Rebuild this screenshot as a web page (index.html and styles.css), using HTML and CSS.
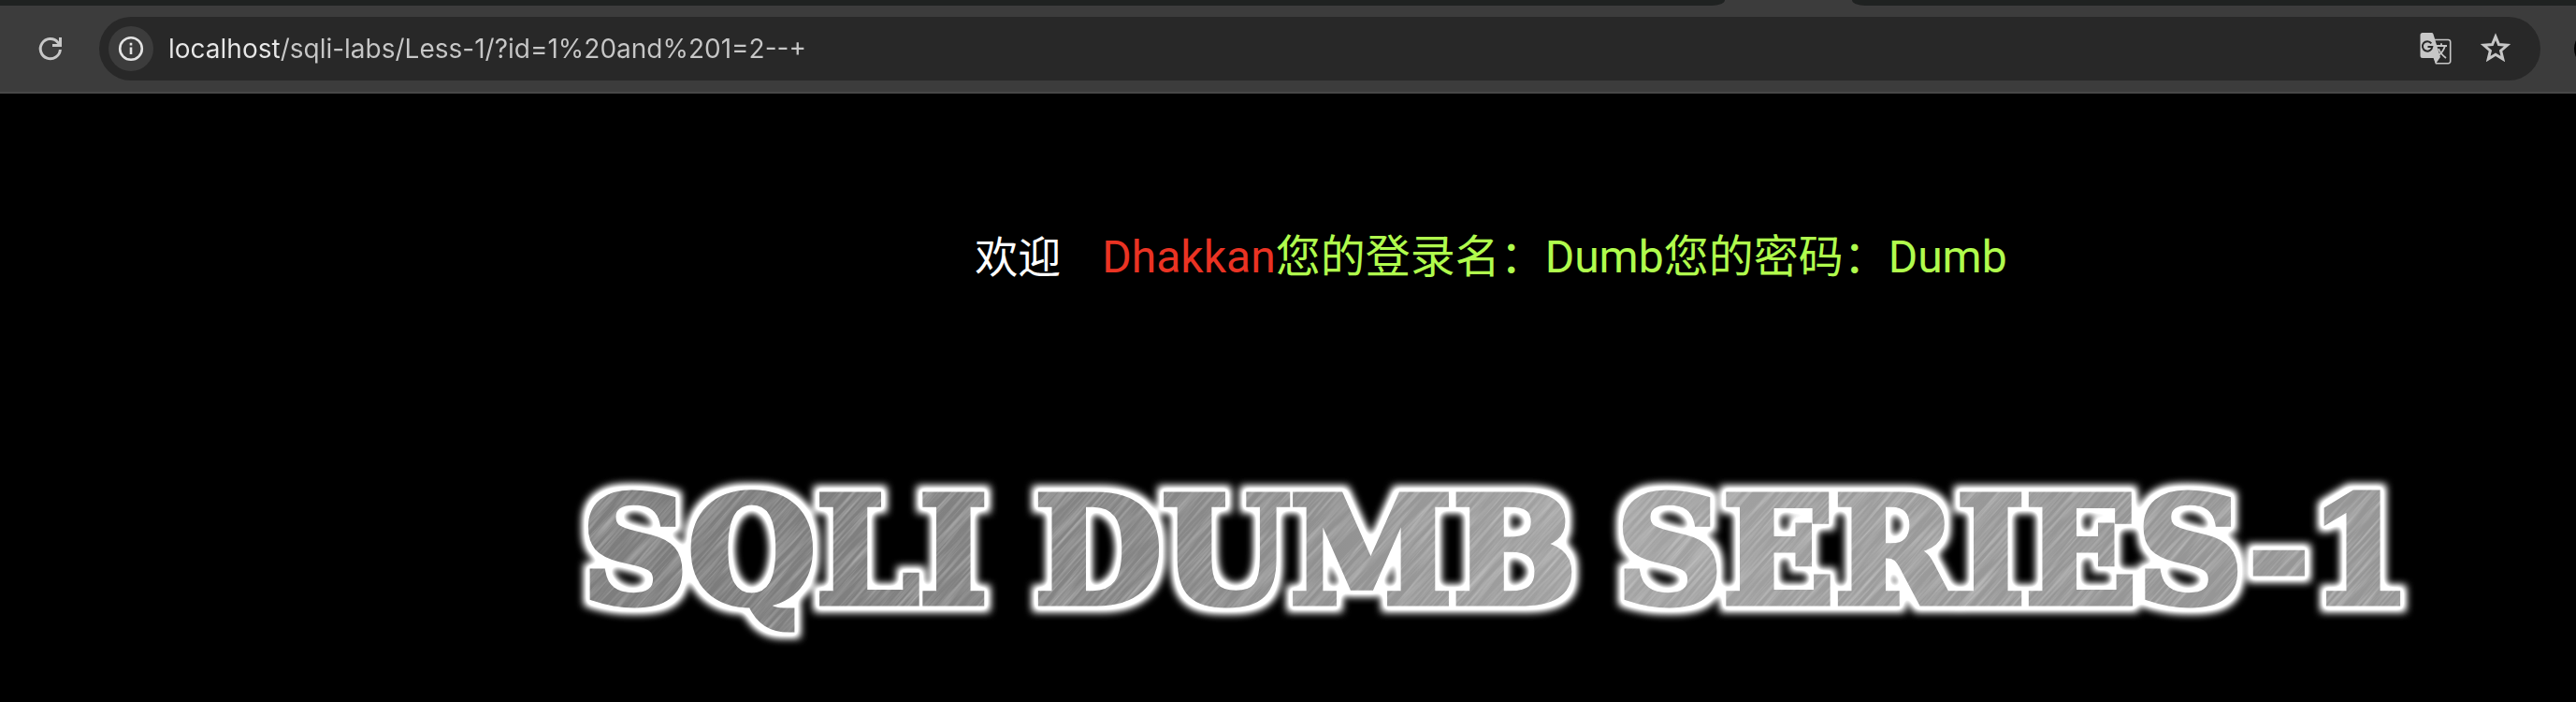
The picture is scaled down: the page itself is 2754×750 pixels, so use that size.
FILE: index.html
```html
<!DOCTYPE html>
<html lang="zh-CN">
<head>
<meta charset="utf-8">
<title>Less-1</title>
<link rel="stylesheet" href="styles.css">
</head>
<body>
<header class="browser">
  <div class="tabstrip">
    <div class="tabs-before"></div>
    <div class="tab-active"></div>
    <div class="tabs-after"></div>
  </div>
  <div class="toolbar">
    <button class="icon-button reload" type="button" aria-label="Reload">
      <svg width="28" height="28" viewBox="0 0 28 28" fill="none" stroke="currentColor" stroke-width="3">
        <path d="M24.4 15A10.6 10.6 0 1 1 21.8 7.2L24.6 10"/>
        <path d="M24.5 2V10.5H16"/>
      </svg>
    </button>
    <div class="omnibox">
      <button class="icon-button site-info" type="button" aria-label="Site information">
        <svg width="28" height="28" viewBox="0 0 28 28" fill="none" stroke="currentColor">
          <circle cx="14" cy="14" r="11.8" stroke-width="2.6"/>
          <path d="M14 12.4V20M14 7.8V10.4" stroke-width="2.6"/>
        </svg>
      </button>
      <input class="url" type="text" aria-label="Address" value="localhost/sqli-labs/Less-1/?id=1%20and%201=2--+" spellcheck="false">
      <button class="icon-button" type="button" aria-label="Translate">
        <svg width="36" height="36" viewBox="0 0 36 36">
          <path d="M15 8.500H31.500A2.200 2.200 0 0 1 33.700 10.700V31.500A2.200 2.200 0 0 1 31.500 33.700H18.500L15 24" fill="none" stroke="currentColor" stroke-width="1.600"/>
          <path d="M4 1H13.500A2 2 0 0 1 15.400 2.300L23 27L18 34.200L16.200 28H4A2.500 2.500 0 0 1 1.500 25.500V3.500A2.500 2.500 0 0 1 4 1Z" fill="currentColor"/>
          <path d="M13.300 12.300A5.200 5.200 0 1 0 14.300 16H9.500" fill="none" stroke="#282828" stroke-width="2"/>
          <path d="M18.500 15H30M24 12.200V15M28 15Q25.800 22.500 19.500 26M21 18Q23.500 24 29 28" fill="none" stroke="currentColor" stroke-width="1.800"/>
        </svg>
      </button>
      <button class="icon-button" type="button" aria-label="Bookmark">
        <svg width="36" height="36" viewBox="0 0 36 36">
          <path d="M18 5.200L21.500 13.600L30.500 14.300L23.600 20.200L25.800 29L18 24.200L10.200 29L12.400 20.200L5.500 14.300L14.500 13.600Z" fill="none" stroke="currentColor" stroke-width="3"/>
        </svg>
      </button>
    </div>
    <div class="extension"></div>
  </div>
</header>
<main class="page">
  <p class="message"><span class="welcome">欢迎</span><span class="name">Dhakkan</span><span class="login">您的登录名：Dumb您的密码：Dumb</span></p>
  <svg class="banner" viewBox="0 0 2754 240" role="img" aria-label="SQLI DUMB SERIES-1">
    <defs>
      <linearGradient id="tone" x1="0" x2="1" y1="0" y2="0">
        <stop offset="0" stop-color="#888"/>
        <stop offset=".27" stop-color="#7c7c7c"/>
        <stop offset=".45" stop-color="#868686"/>
        <stop offset=".62" stop-color="#a4a4a4"/>
        <stop offset=".8" stop-color="#969696"/>
        <stop offset="1" stop-color="#969696"/>
      </linearGradient>
      <filter id="metal" x="0" y="0" width="2754" height="240" filterUnits="userSpaceOnUse" color-interpolation-filters="sRGB">
        <feMorphology in="SourceAlpha" operator="dilate" radius="6" result="wide"/>
        <feGaussianBlur in="wide" stdDeviation="4" result="soft"/>
        <feComponentTransfer in="soft" result="glowAlpha"><feFuncA type="linear" slope="1.400"/></feComponentTransfer>
        <feFlood flood-color="#fff"/>
        <feComposite in2="glowAlpha" operator="in" result="glow"/>
        <feMerge><feMergeNode in="glow"/><feMergeNode in="SourceGraphic"/></feMerge>
      </filter>
      <filter id="grain" x="0" y="0" width="1" height="1" color-interpolation-filters="sRGB">
        <feTurbulence type="fractalNoise" baseFrequency=".012 .3" numOctaves="3" seed="4"/>
        <feColorMatrix values="0 0 0 0 1  0 0 0 0 1  0 0 0 0 1  .7 0 0 0 -.28"/>
      </filter>
      <pattern id="brushed" width="2754" height="240" patternUnits="userSpaceOnUse">
        <rect width="2754" height="240" fill="url(#tone)"/>
        <g transform="rotate(-48)">
          <rect x="-300" y="-50" width="2300" height="2300" filter="url(#grain)"/>
        </g>
      </pattern>
    </defs>
    <g class="banner-text" filter="url(#metal)">
      <text x="622" y="172">SQLI</text>
      <text x="1106" y="172">DUMB</text>
      <text x="1728" y="172">SERIES-1</text>
    </g>
  </svg>
</main>
</body>
</html>
```
FILE: styles.css
```css
* { box-sizing: border-box; }
body {
  margin: 0;
  min-height: 100vh;
  background: #000;
  font-family: Roboto, "Noto Sans CJK SC", sans-serif;
}
.tabstrip {
  display: flex;
  height: 6px;
  background: #3c3c3c;
}
.tabs-before, .tabs-after { background: #1f2221; }
.tabs-before { flex: 1844; border-bottom-right-radius: 14px 6px; }
.tab-active { flex: 136; }
.tabs-after { flex: 774; border-bottom-left-radius: 14px 6px; }
.toolbar {
  display: flex;
  align-items: center;
  height: 94px;
  padding-left: 30px;
  background: #3c3c3c;
  border-bottom: 2px solid #484848;
  color: #c7c7c7;
  overflow: hidden;
}
.icon-button {
  display: flex;
  align-items: center;
  justify-content: center;
  flex: none;
  width: 48px;
  height: 48px;
  padding: 0;
  border: 0;
  border-radius: 50%;
  background: transparent;
  color: inherit;
}
.reload { margin-right: 28px; }
.omnibox {
  display: flex;
  align-items: center;
  gap: 16px;
  flex: 1;
  height: 68px;
  padding: 0 24px 0 10px;
  border-radius: 34px;
  background: #282828;
}
.site-info { background: #3c3c3c; color: #e3e3e3; }
.url {
  flex: 1;
  min-width: 0;
  height: 48px;
  padding: 0;
  border: 0;
  outline: 0;
  font: 28px/48px Inter, sans-serif;
  color: transparent;
  background: linear-gradient(90deg, #e8e8e8 120px, #c7c7c7 120px);
  -webkit-background-clip: text;
  background-clip: text;
}
.extension {
  flex: none;
  width: 40px;
  height: 40px;
  margin: 0 -38px 0 36px;
  border-radius: 50%;
  background: #000;
}
.page { padding-top: 140px; }
.message {
  margin: 0;
  padding-left: 434px;
  text-align: center;
  font-size: 48px;
  line-height: 70px;
  color: #fff;
}
.welcome { margin-right: 44px; font-size: 46px; }
.name { color: #ea3323; }
.login { color: #b0fc4d; }
.banner {
  display: block;
  width: 100%;
  margin-top: 162px;
}
.banner-text {
  font: bold 157px "DejaVu Serif", serif;
  fill: url(#brushed);
  stroke: url(#brushed);
  stroke-width: 7px;
}
```
